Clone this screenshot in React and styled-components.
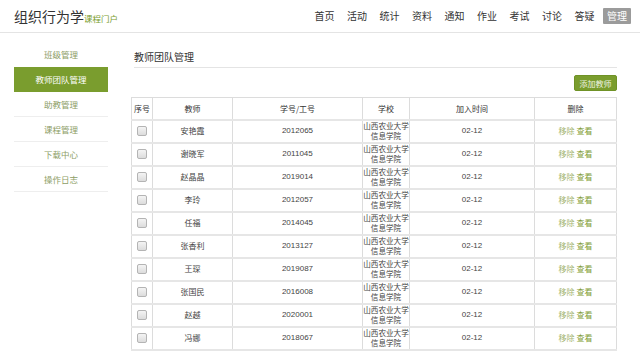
import React from "react";
import styled, { createGlobalStyle } from "styled-components";

const Global = createGlobalStyle`
  html, body { margin: 0; padding: 0; background: #fff; }
  body { font-family: "Liberation Sans", "Noto Sans CJK SC", sans-serif; color: #333; }
  * { box-sizing: border-box; }
`;

const GREEN = "#7a9d2e";

const Header = styled.header`
  height: 33px;
  border-bottom: 1px solid #e4e4e4;
  display: flex;
  align-items: center;
  justify-content: space-between;
  padding: 0 9px 1px 14px;
`;

const Logo = styled.div`
  display: flex;
  align-items: baseline;
  font-family: "Noto Sans CJK SC", sans-serif;
`;

const LogoMain = styled.span`
  font-size: 14px;
  line-height: 16px;
  color: #333;
`;

const LogoSub = styled.span`
  font-size: 8.5px;
  color: ${GREEN};
`;

const Nav = styled.nav`
  display: flex;
  align-items: center;
  gap: 4.5px;
  font-family: "Noto Sans CJK SC", sans-serif;
`;

const NavItem = styled.a`
  display: block;
  padding: 3px 4px;
  font-size: 10px;
  line-height: 10px;
  color: ${(p) => (p.$active ? "#fff" : "#333")};
  background: ${(p) => (p.$active ? "#9b9b9b" : "transparent")};
  border-radius: 1px;
`;

const Body = styled.div`
  display: flex;
  align-items: flex-start;
  gap: 23px;
  padding: 9px 23px 0 14px;
`;

const Sidebar = styled.ul`
  list-style: none;
  margin: 0;
  padding: 0;
  width: 95px;
  font-family: "Noto Sans CJK SC", sans-serif;
`;

const SideItem = styled.li`
  height: 25px;
  display: flex;
  align-items: center;
  justify-content: center;
  font-size: 8.5px;
  color: ${(p) => (p.$active ? "#fff" : "#8d9d66")};
  background: ${(p) => (p.$active ? GREEN : "transparent")};
  border-bottom: 1px solid ${(p) => (p.$active ? GREEN : p.$first ? "transparent" : "#eeeeee")};
`;

const Main = styled.main`
  flex: 1;
  display: flex;
  flex-direction: column;
`;

const Title = styled.h2`
  margin: 0 0 0 3px;
  padding: 10px 0 5px;
  font-size: 10px;
  line-height: 10px;
  font-weight: normal;
  color: #333;
  border-bottom: 1px solid #e4e4e4;
  font-family: "Noto Sans CJK SC", sans-serif;
`;

const Toolbar = styled.div`
  display: flex;
  justify-content: flex-end;
  margin-top: 7px;
`;

const AddButton = styled.button`
  height: 16px;
  width: 43px;
  padding: 0;
  border: 1px solid #6f9226;
  border-radius: 2px;
  background: ${GREEN};
  color: #eef3e2;
  font-size: 8px;
  font-family: "Noto Sans CJK SC", sans-serif;
`;

const Table = styled.table`
  margin-top: 6px;
  width: 485px;
  border-collapse: collapse;
  table-layout: fixed;
  font-size: 8px;
  color: #444;
`;

const Th = styled.th`
  height: 22px;
  padding: 0;
  font-weight: normal;
  color: #333;
  text-align: center;
  border: 1px solid #dcdcdc;
  border-bottom: 2px solid #e6e6e6;
  font-family: "Noto Sans CJK SC", sans-serif;
`;

const Td = styled.td`
  height: 23px;
  padding: 0;
  text-align: center;
  vertical-align: middle;
  white-space: nowrap;
  border-left: 1px solid #dcdcdc;
  border-right: 1px solid #dcdcdc;
  border-bottom: 2px solid #e6e6e6;
  font-family: ${(p) => (p.$cjk ? '"Noto Sans CJK SC", sans-serif' : '"Liberation Sans", sans-serif')};
  font-size: ${(p) => (p.$small ? "7.6px" : "8px")};
  line-height: 10px;
  overflow: visible;
`;

const Check = styled.span`
  display: inline-block;
  width: 10px;
  height: 10px;
  border: 1px solid #b4b4b4;
  border-radius: 2px;
  background: linear-gradient(#f4f4f4, #dcdcdc);
  vertical-align: middle;
`;

const Link = styled.a`
  color: ${(p) => (p.$light ? "#a3b46f" : "#7f9d35")};
  margin: 0 1px;
`;

const navs = ["首页", "活动", "统计", "资料", "通知", "作业", "考试", "讨论", "答疑", "管理"];
const sides = ["班级管理", "教师团队管理", "助教管理", "课程管理", "下载中心", "操作日志"];
const rows = [
  ["安艳霞", "2012065"],
  ["谢晓军", "2011045"],
  ["赵晶晶", "2019014"],
  ["李玲", "2012057"],
  ["任福", "2014045"],
  ["张香利", "2013127"],
  ["王琛", "2019087"],
  ["张国民", "2016008"],
  ["赵越", "2020001"],
  ["冯娜", "2018067"],
];

export default function App() {
  return (
    <>
      <Global />
      <Header>
        <Logo>
          <LogoMain>组织行为学</LogoMain>
          <LogoSub>课程门户</LogoSub>
        </Logo>
        <Nav>
          {navs.map((n) => (
            <NavItem key={n} $active={n === "管理"}>{n}</NavItem>
          ))}
        </Nav>
      </Header>
      <Body>
        <Sidebar>
          {sides.map((s, i) => (
            <SideItem key={s} $active={i === 1} $first={i === 0}>{s}</SideItem>
          ))}
        </Sidebar>
        <Main>
          <Title>教师团队管理</Title>
          <Toolbar>
            <AddButton>添加教师</AddButton>
          </Toolbar>
          <Table>
            <colgroup>
              <col style={{ width: 21 }} />
              <col style={{ width: 80 }} />
              <col style={{ width: 130 }} />
              <col style={{ width: 47 }} />
              <col style={{ width: 125 }} />
              <col style={{ width: 82 }} />
            </colgroup>
            <thead>
              <tr>
                <Th>序号</Th>
                <Th>教师</Th>
                <Th>学号/工号</Th>
                <Th>学校</Th>
                <Th>加入时间</Th>
                <Th>删除</Th>
              </tr>
            </thead>
            <tbody>
              {rows.map(([name, id]) => (
                <tr key={id}>
                  <Td><Check /></Td>
                  <Td $cjk>{name}</Td>
                  <Td>{id}</Td>
                  <Td $cjk $small>山西农业大学<br />信息学院</Td>
                  <Td>02-12</Td>
                  <Td $cjk>
                    <Link $light>移除</Link>
                    <Link>查看</Link>
                  </Td>
                </tr>
              ))}
            </tbody>
          </Table>
        </Main>
      </Body>
    </>
  );
}
